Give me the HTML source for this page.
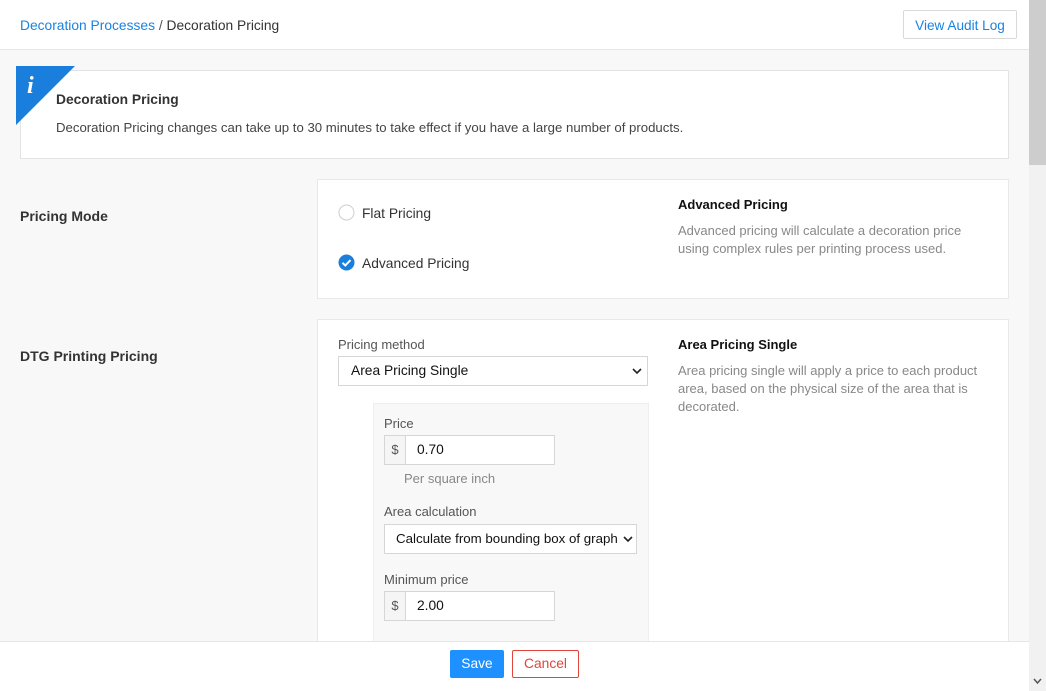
<!DOCTYPE html>
<html><head><style>
*{box-sizing:border-box;margin:0;padding:0}
body{width:1046px;height:691px;overflow:hidden;font-family:"Liberation Sans",sans-serif;font-size:13.8px;color:#333;background:#f8f8f8;position:relative}
.hdr{position:absolute;left:0;top:0;width:1029px;height:50px;background:#fff;border-bottom:1px solid #e6e6e6}
.bc{position:absolute;left:20px;top:18px;font-size:13.8px}
.bc a{color:#1a82e2}
.audit{position:absolute;left:903px;top:10px;width:114px;height:29px;border:1px solid #d9d9d9;border-radius:2px;color:#1a82e2;text-align:center;line-height:29px;background:#fff;font-size:13.6px}
.sb{position:absolute;left:1029px;top:0;width:17px;height:691px;background:#f1f1f1}
.thumb{position:absolute;left:0;top:0;width:17px;height:165px;background:#cdcdcd}
.info{position:absolute;left:20px;top:70px;width:989px;height:89px;background:#fff;border:1px solid #e3e3e3}
.card{position:absolute;left:317px;width:692px;background:#fff;border:1px solid #e8e8e8}
.lbl{position:absolute;left:20px;font-weight:bold;font-size:14px;color:#333}
.muted{color:#888}
.sel{position:absolute;background:#fff;border:1px solid #d6d6d6;height:30px;line-height:28px;padding-left:12px;color:#111;font-size:13.8px;overflow:hidden;white-space:nowrap}
.sel svg{position:absolute;right:5px;top:10px}
.inp{position:absolute;height:30px;width:171px;border:1px solid #d6d6d6;background:#fff}
.inp .p{position:absolute;left:0;top:0;width:21px;height:28px;background:#f5f5f5;border-right:1px solid #d6d6d6;text-align:center;line-height:28px;color:#555;font-size:13px}
.inp .v{position:absolute;left:32px;top:0;line-height:28px;color:#111}
.ft{position:absolute;left:0;top:641px;width:1029px;height:50px;background:#fff;border-top:1px solid #e6e6e6}
</style></head><body>
<div class="hdr"><div class="bc"><a>Decoration Processes</a> <span style="color:#555">/</span> Decoration Pricing</div><div class="audit">View Audit Log</div></div>
<div class="info">
<div style="position:absolute;left:35px;top:21px;font-weight:bold;font-size:13.8px">Decoration Pricing</div>
<div style="position:absolute;left:35px;top:49px;font-size:13.2px;color:#444">Decoration Pricing changes can take up to 30 minutes to take effect if you have a large number of products.</div>
</div>
<svg style="position:absolute;left:16px;top:66px" width="60" height="60"><polygon points="0,0 59,0 0,59" fill="#1a7fdc"/><text x="11" y="27" font-family="Liberation Serif" font-style="italic" font-weight="bold" font-size="24" fill="#fff">i</text></svg>
<div class="lbl" style="top:208px">Pricing Mode</div>
<div class="card" style="top:179px;height:120px">
<svg style="position:absolute;left:20px;top:24px" width="17" height="17"><circle cx="8.5" cy="8.5" r="7.5" fill="#fff" stroke="#ccc"/></svg>
<div style="position:absolute;left:44px;top:26px">Flat Pricing</div>
<svg style="position:absolute;left:20px;top:74px" width="17" height="17"><circle cx="8.5" cy="8.5" r="8" fill="#1a7fdc"/><path d="M4.5 8.8l2.8 2.7 5.2-5.4" stroke="#fff" stroke-width="2" fill="none"/></svg>
<div style="position:absolute;left:44px;top:76px">Advanced Pricing</div>
<div style="position:absolute;left:360px;top:17px;font-weight:bold;color:#111;font-size:13px">Advanced Pricing</div>
<div class="muted" style="position:absolute;left:360px;top:42px;width:310px;line-height:18px;font-size:13px">Advanced pricing will calculate a decoration price using complex rules per printing process used.</div>
</div>
<div class="lbl" style="top:348px">DTG Printing Pricing</div>
<div class="card" style="top:319px;height:340px">
<div style="position:absolute;left:20px;top:17px;color:#555;font-size:13px">Pricing method</div>
<div class="sel" style="left:20px;top:36px;width:310px">Area Pricing Single<svg width="10" height="8"><path d="M1 2l4 4 4-4" stroke="#222" stroke-width="1.6" fill="none"/></svg></div>
<div style="position:absolute;left:55px;top:83px;width:276px;height:260px;background:#f8f8f8;border:1px solid #eee">
<div style="position:absolute;left:10px;top:12px;color:#555;font-size:13px">Price</div>
<div class="inp" style="left:10px;top:31px"><div class="p">$</div><div class="v">0.70</div></div>
<div class="muted" style="position:absolute;left:30px;top:67px;font-size:13px">Per square inch</div>
<div style="position:absolute;left:10px;top:100px;color:#555;font-size:13px">Area calculation</div>
<div class="sel" style="left:10px;top:120px;width:253px;padding-left:11px;font-size:13.3px">Calculate from bounding box of graph<svg width="10" height="8" style="right:3px;background:#fff"><path d="M1 2l4 4 4-4" stroke="#222" stroke-width="1.6" fill="none"/></svg></div>
<div style="position:absolute;left:10px;top:168px;color:#555;font-size:13px">Minimum price</div>
<div class="inp" style="left:10px;top:187px"><div class="p">$</div><div class="v">2.00</div></div>
</div>
<div style="position:absolute;left:360px;top:17px;font-weight:bold;color:#111;font-size:13px">Area Pricing Single</div>
<div class="muted" style="position:absolute;left:360px;top:42px;width:310px;line-height:18px;font-size:13px">Area pricing single will apply a price to each product area, based on the physical size of the area that is decorated.</div>
</div>
<div class="ft">
<div style="position:absolute;left:450px;top:8px;width:54px;height:28px;background:#1e90ff;color:#fff;text-align:center;line-height:28px;border-radius:2px">Save</div>
<div style="position:absolute;left:512px;top:8px;width:67px;height:28px;border:1px solid #e0453a;color:#e0453a;text-align:center;line-height:26px;border-radius:2px">Cancel</div>
</div>
<div class="sb"><div class="thumb"></div><svg style="position:absolute;left:4px;top:678px" width="9" height="7"><path d="M1 1l3.5 4 3.5-4" stroke="#555" stroke-width="1.5" fill="none"/></svg></div>
</body></html>
